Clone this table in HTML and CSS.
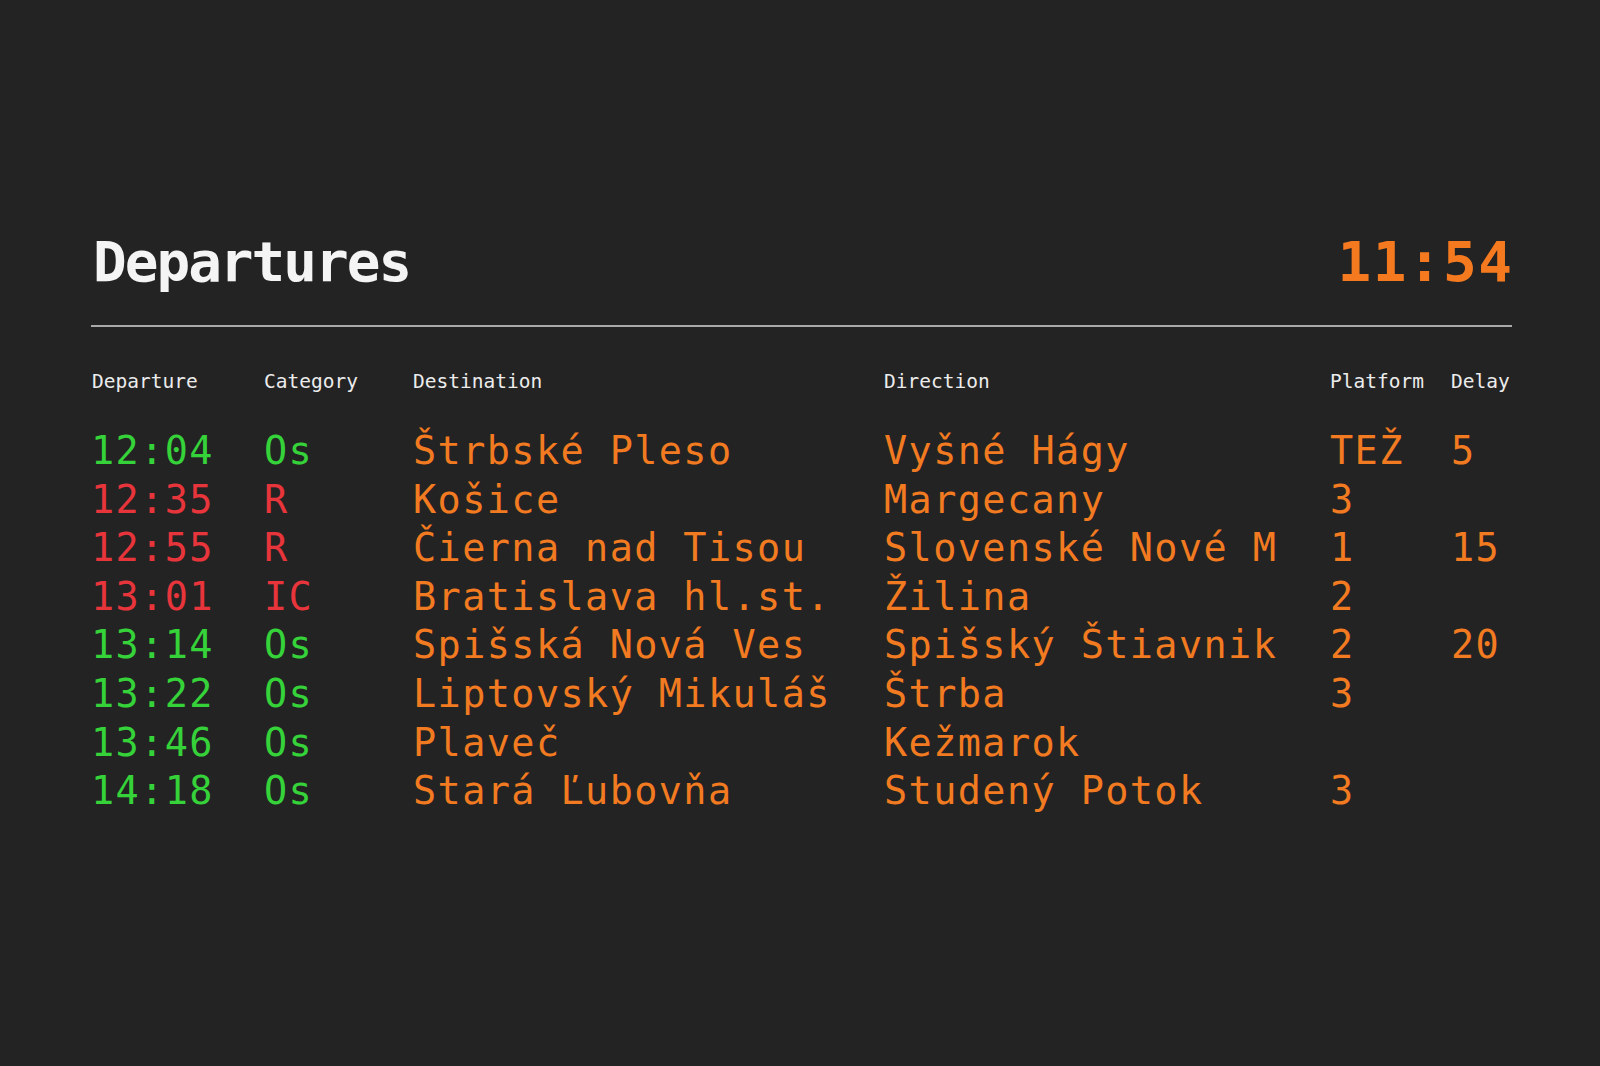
FILE: index.html
```html
<!DOCTYPE html>
<html lang="sk">
<head>
<meta charset="utf-8">
<title>Departures</title>
<link rel="stylesheet" href="styles.css">
</head>
<body>
<main class="board">
  <header class="board-head">
    <h1 class="title">Departures</h1>
    <div class="clock">11:54</div>
  </header>
  <div class="rule"></div>
  <div class="table">
    <div class="row labels">
      <span>Departure</span><span>Category</span><span>Destination</span><span>Direction</span><span>Platform</span><span>Delay</span>
    </div>
    <div class="rows">
      <div class="row ok"><span class="st">12:04</span><span class="st">Os</span><span>Štrbské Pleso</span><span>Vyšné Hágy</span><span>TEŽ</span><span>5</span></div>
      <div class="row late"><span class="st">12:35</span><span class="st">R</span><span>Košice</span><span>Margecany</span><span>3</span><span></span></div>
      <div class="row late"><span class="st">12:55</span><span class="st">R</span><span>Čierna nad Tisou</span><span>Slovenské Nové M</span><span>1</span><span>15</span></div>
      <div class="row late"><span class="st">13:01</span><span class="st">IC</span><span>Bratislava hl.st.</span><span>Žilina</span><span>2</span><span></span></div>
      <div class="row ok"><span class="st">13:14</span><span class="st">Os</span><span>Spišská Nová Ves</span><span>Spišský Štiavnik</span><span>2</span><span>20</span></div>
      <div class="row ok"><span class="st">13:22</span><span class="st">Os</span><span>Liptovský Mikuláš</span><span>Štrba</span><span>3</span><span></span></div>
      <div class="row ok"><span class="st">13:46</span><span class="st">Os</span><span>Plaveč</span><span>Kežmarok</span><span></span><span></span></div>
      <div class="row ok"><span class="st">14:18</span><span class="st">Os</span><span>Stará Ľubovňa</span><span>Studený Potok</span><span>3</span><span></span></div>
    </div>
  </div>
</main>
</body>
</html>
```

FILE: styles.css
```css
html, body {
  margin: 0;
  padding: 0;
  background: #232323;
}

body {
  width: 1600px;
  height: 1066px;
  overflow: hidden;
  font-family: "DejaVu Sans Mono", "Liberation Mono", monospace;
}

.board {
  padding: 230px 88px 0 91px;
}

.board-head {
  display: flex;
  justify-content: space-between;
  align-items: baseline;
  height: 64px;
}

.title {
  margin: 0;
  font-size: 56px;
  line-height: 64px;
  font-weight: bold;
  letter-spacing: -2px;
  color: #f4f4f4;
  padding-left: 2px;
}

.clock {
  font-size: 56px;
  line-height: 64px;
  font-weight: bold;
  letter-spacing: 1.5px;
  margin-right: -1.5px;
  color: #f57a1f;
}

.rule {
  margin-top: 31px;
  height: 0;
  border-top: 2px solid #a9a9a9;
}

.table {
  margin-top: 43px;
}

.row {
  display: grid;
  grid-template-columns: 173px 149px 471px 446px 121px 1fr;
  white-space: nowrap;
}

.labels {
  font-size: 19.5px;
  line-height: 24px;
  color: #ececec;
}

.labels span:first-child {
  padding-left: 1px;
}

.rows {
  margin-top: 33px;
}

.rows .row {
  font-size: 38.5px;
  line-height: 48.6px;
  letter-spacing: 1.4px;
  color: #f27b21;
}

.row.ok .st {
  color: #36d23a;
}

.row.late .st {
  color: #e8353c;
}
```
